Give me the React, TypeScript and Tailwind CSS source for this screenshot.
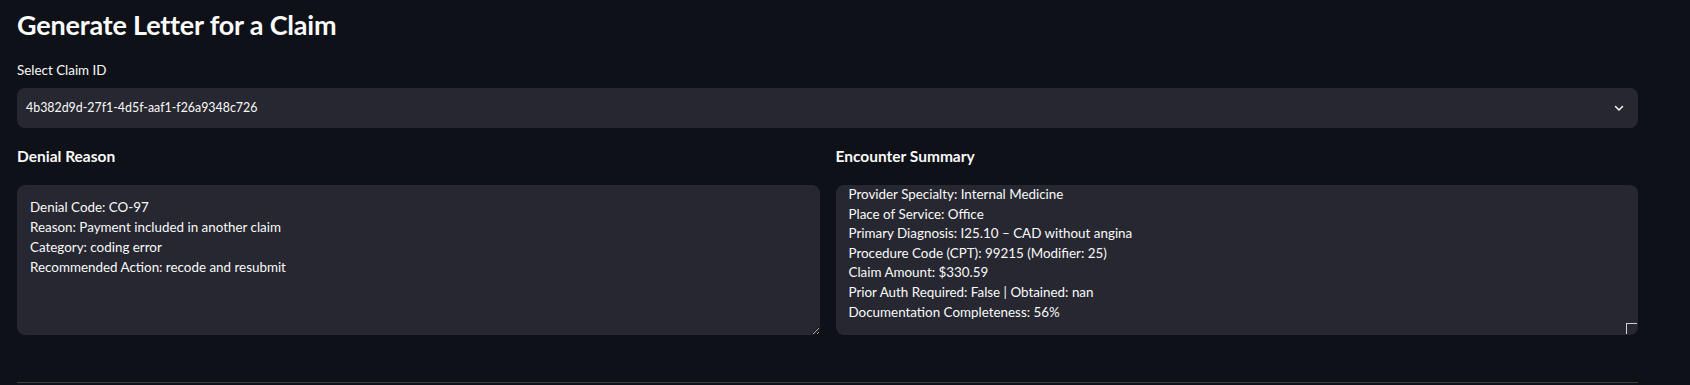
import React from 'react';

const FONT = { fontFamily: 'Lato, "Noto Sans", sans-serif' };

const denialText = [
  'Denial Code: CO-97',
  'Reason: Payment included in another claim',
  'Category: coding error',
  'Recommended Action: recode and resubmit',
].join('\n');

const encounterText = [
  'Provider Specialty: Internal Medicine',
  'Place of Service: Office',
  'Primary Diagnosis: I25.10 – CAD without angina',
  'Procedure Code (CPT): 99215 (Modifier: 25)',
  'Claim Amount: $330.59',
  'Prior Auth Required: False | Obtained: nan',
  'Documentation Completeness: 56%',
].join('\n');

function ChevronDown() {
  return (
    <svg width="12" height="12" viewBox="0 0 24 24" fill="none" stroke="#fafafa" strokeWidth="3" strokeLinecap="round" strokeLinejoin="round">
      <path d="M5 9l7 7 7-7" />
    </svg>
  );
}

export default function App() {
  return (
    <div className="min-h-[385px] w-full bg-[#0e1117] text-[#fafafa]" style={FONT}>
      <div className="w-[1621px] pl-[17px] box-content">
        <h1 className="pt-[7px] text-[27px] font-bold leading-[36px] tracking-[-0.2px]">Generate Letter for a Claim</h1>

        <div className="mt-[17px] text-[13.4px] leading-[20px]">Select Claim ID</div>
        <div className="mt-[8px] flex h-[40px] items-center justify-between rounded-[8px] bg-[#262730] pl-[9px] pr-[13px]">
          <span className="text-[12.4px]">4b382d9d-27f1-4d5f-aaf1-f26a9348c726</span>
          <ChevronDown />
        </div>

        <div className="mt-[18px] grid grid-cols-2 gap-[16px]">
          <div>
            <h3 className="text-[15.5px] font-bold leading-[20px]">Denial Reason</h3>
            <textarea
              readOnly
              defaultValue={denialText}
              className="mt-[19px] block h-[150px] w-full resize-y rounded-[8px] bg-[#262730] px-[13px] pt-[12px] text-[13.4px] leading-[20px] text-[#fafafa] outline-none [color-scheme:dark]"
            />
          </div>
          <div>
            <h3 className="text-[15.5px] font-bold leading-[20px]">Encounter Summary</h3>
            <div className="relative mt-[19px]">
              <textarea
                readOnly
                defaultValue={encounterText}
                className="block h-[150px] w-full resize-none overflow-hidden rounded-[8px] bg-[#262730] px-[13px] pt-[0px] text-[13.4px] leading-[19.6px] text-[#fafafa] outline-none"
              />
              <span className="absolute bottom-[1px] right-[1px] h-[11px] w-[11px] border-l border-t border-[#d0d0d0]" />
            </div>
          </div>
        </div>

        <div className="mt-[47px] h-px bg-[#3d3f45]" />
      </div>
    </div>
  );
}
